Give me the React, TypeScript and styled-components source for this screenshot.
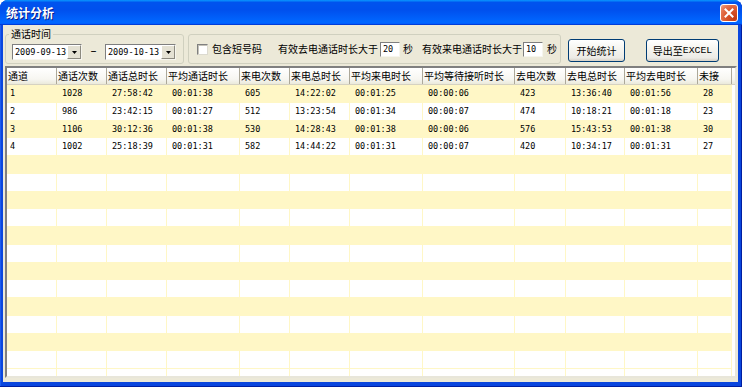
import React from 'react';
import styled, { createGlobalStyle } from 'styled-components';

const GlobalStyle = createGlobalStyle`
  html, body {
    margin: 0;
    padding: 0;
    background: #ffffff;
    overflow: hidden;
  }
  body {
    font-family: "Noto Sans CJK SC", "Noto Sans", sans-serif;
    font-size: 10px;
    color: #000;
  }
`;

const CJK = '"Noto Sans CJK SC", "Noto Sans", sans-serif';
const MONO = '"DejaVu Sans Mono", "Liberation Mono", monospace';
const STRIPE = '#fff7c6';

interface Column {
  title: string;
  width: number;
}

const columns: Column[] = [
  { title: '通道', width: 50 },
  { title: '通话次数', width: 50 },
  { title: '通话总时长', width: 60 },
  { title: '平均通话时长', width: 73 },
  { title: '来电次数', width: 50 },
  { title: '来电总时长', width: 60 },
  { title: '平均来电时长', width: 73 },
  { title: '平均等待接听时长', width: 92 },
  { title: '去电次数', width: 51 },
  { title: '去电总时长', width: 59 },
  { title: '平均去电时长', width: 73 },
  { title: '未接', width: 34 },
];

const data: string[][] = [
  ['1', '1028', '27:58:42', '00:01:38', '605', '14:22:02', '00:01:25', '00:00:06', '423', '13:36:40', '00:01:56', '28'],
  ['2', '986', '23:42:15', '00:01:27', '512', '13:23:54', '00:01:34', '00:00:07', '474', '10:18:21', '00:01:18', '23'],
  ['3', '1106', '30:12:36', '00:01:38', '530', '14:28:43', '00:01:38', '00:00:06', '576', '15:43:53', '00:01:38', '30'],
  ['4', '1002', '25:18:39', '00:01:31', '582', '14:44:22', '00:01:31', '00:00:07', '420', '10:34:17', '00:01:31', '27'],
];

const TOTAL_ROWS = 17;

const App: React.FC = () => {
  const rows: (string[] | null)[] = [];
  for (let i = 0; i < TOTAL_ROWS; i++) rows.push(data[i] ?? null);

  return (
    <>
      <GlobalStyle />
      <Window>
        <TitleBar>
          <Title>统计分析</Title>
          <CloseButton>
            <svg width="10" height="10" viewBox="0 0 10 10">
              <path d="M1.5 1.5 L8.5 8.5 M8.5 1.5 L1.5 8.5" stroke="#fff" strokeWidth="2" strokeLinecap="square" />
            </svg>
          </CloseButton>
        </TitleBar>

        <Client>
          <TopRow>
            <DateGroup>
              <Legend>通话时间</Legend>
              <Combo $w={70}>
                <ComboText>2009-09-13</ComboText>
                <ComboArrow>
                  <svg width="5" height="3" viewBox="0 0 5 3">
                    <path d="M0 0 H5 L2.5 3 Z" fill="#000" />
                  </svg>
                </ComboArrow>
              </Combo>
              <Dash>–</Dash>
              <Combo $w={71}>
                <ComboText>2009-10-13</ComboText>
                <ComboArrow>
                  <svg width="5" height="3" viewBox="0 0 5 3">
                    <path d="M0 0 H5 L2.5 3 Z" fill="#000" />
                  </svg>
                </ComboArrow>
              </Combo>
            </DateGroup>

            <OptionsGroup>
              <CheckBox />
              <Label $gap={4}>包含短号码</Label>
              <Label $gap={16}>有效去电通话时长大于</Label>
              <NumberField $gap={2}>20</NumberField>
              <Label $gap={3}>秒</Label>
              <Label $gap={9}>有效来电通话时长大于</Label>
              <NumberField $gap={1}>10</NumberField>
              <Label $gap={4}>秒</Label>
            </OptionsGroup>

            <XpButton $gap={7} $w={57}>开始统计</XpButton>
            <XpButton $gap={21} $w={73}>
              导出至<Latin>EXCEL</Latin>
            </XpButton>
          </TopRow>

          <ListView>
            <Header>
              {columns.map((c) => (
                <HeaderCell key={c.title} $w={c.width}>
                  {c.title}
                </HeaderCell>
              ))}
              <HeaderFiller />
            </Header>
            {rows.map((r, i) => (
              <Row key={i} $striped={i % 2 === 0 && i < 16}>
                {columns.map((c, j) => (
                  <Cell key={c.title} $w={c.width} $first={j === 0}>
                    {r ? r[j] : ''}
                  </Cell>
                ))}
              </Row>
            ))}
          </ListView>
        </Client>
      </Window>
    </>
  );
};

// Styled Components
const Window = styled.div`
  width: 742px;
  height: 387px;
  display: flex;
  flex-direction: column;
  background: #0a46de;
  border-radius: 8px 8px 0 0;
  overflow: hidden;
  box-shadow: inset -1px -1px 0 #001ea0, inset 1px 0 0 #1b5cf0;
`;

const TitleBar = styled.div`
  height: 25px;
  flex: 0 0 25px;
  display: flex;
  align-items: center;
  justify-content: space-between;
  padding: 0 4px 0 6px;
  box-sizing: border-box;
  background: linear-gradient(
    180deg,
    #0997ff 0%,
    #0053ee 10%,
    #0050ee 40%,
    #0066ff 86%,
    #0066ff 92%,
    #005bff 95%,
    #003dd7 97%,
    #003dd7 100%
  );
`;

const Title = styled.span`
  font-family: ${CJK};
  font-size: 12px;
  font-weight: bold;
  color: #ffffff;
  text-shadow: 1px 1px 0 #0a1a8a;
`;

const CloseButton = styled.div`
  width: 18px;
  height: 18px;
  box-sizing: border-box;
  border: 1px solid #ffffff;
  border-radius: 3px;
  display: flex;
  align-items: center;
  justify-content: center;
  background: radial-gradient(circle at 85% 85%, #c43b12 0%, #d9552c 45%, #e57450 75%, #f0a688 100%);
`;

const Client = styled.div`
  flex: 1;
  display: flex;
  flex-direction: column;
  margin: 0 4px 5px 3px;
  padding: 3px 1px 4px 2px;
  background: #ece9d8;
  min-height: 0;
`;

const TopRow = styled.div`
  display: flex;
  align-items: flex-start;
  height: 36px;
  flex: 0 0 36px;
`;

const DateGroup = styled.fieldset`
  margin: 0;
  width: 179px;
  box-sizing: border-box;
  padding: 4px 7px 3px 6px;
  border: 1px solid #d0d0bf;
  border-radius: 3px;
  display: flex;
  align-items: center;
  min-width: 0;
`;

const Legend = styled.legend`
  font-family: ${CJK};
  font-size: 10px;
  line-height: 12px;
  padding: 0 2px;
  margin-left: -3px;
  color: #000;
`;

const Combo = styled.div<{ $w: number }>`
  width: ${(p) => p.$w}px;
  height: 16px;
  box-sizing: border-box;
  display: flex;
  align-items: stretch;
  background: #ffffff;
  border: 1px solid;
  border-color: #7f7f7f #f6f5ee #f6f5ee #7f7f7f;
`;

const ComboText = styled.span`
  flex: 1;
  font-family: ${MONO};
  font-size: 8.5px;
  line-height: 14px;
  padding-left: 2px;
  white-space: nowrap;
`;

const ComboArrow = styled.span`
  width: 14px;
  box-sizing: border-box;
  display: flex;
  align-items: center;
  justify-content: center;
  background: #e4e1d3;
  border: 1px solid;
  border-color: #ffffff #8c8a80 #8c8a80 #ffffff;
`;

const Dash = styled.span`
  width: 23px;
  height: 16px;
  text-align: center;
  font-family: "DejaVu Sans", sans-serif;
  font-size: 12px;
  line-height: 15px;
`;

const OptionsGroup = styled.div`
  margin: 6px 0 0 4px;
  width: 373px;
  height: 30px;
  box-sizing: border-box;
  border: 1px solid #d0d0bf;
  border-radius: 3px;
  display: flex;
  align-items: center;
  padding-left: 8px;
`;

const CheckBox = styled.span`
  width: 11px;
  height: 11px;
  box-sizing: border-box;
  background: #ffffff;
  border: 1px solid;
  border-color: #808080 #dcdad0 #dcdad0 #808080;
  box-shadow: inset 1px 1px 0 #c4c2b8;
`;

const Label = styled.span<{ $gap: number }>`
  margin-left: ${(p) => p.$gap}px;
  font-family: ${CJK};
  font-size: 10px;
  line-height: 12px;
  white-space: nowrap;
`;

const NumberField = styled.span<{ $gap: number }>`
  margin-left: ${(p) => p.$gap}px;
  width: 20px;
  height: 15px;
  box-sizing: border-box;
  background: #ffffff;
  border: 1px solid;
  border-color: #7f7f7f #f6f5ee #f6f5ee #7f7f7f;
  font-family: ${MONO};
  font-size: 8.5px;
  line-height: 13px;
  padding-left: 2px;
`;

const XpButton = styled.div<{ $gap: number; $w: number }>`
  margin: 11px 0 0 ${(p) => p.$gap}px;
  width: ${(p) => p.$w}px;
  height: 23px;
  box-sizing: border-box;
  border: 1px solid #003c74;
  border-radius: 3px;
  display: flex;
  align-items: center;
  justify-content: center;
  background: linear-gradient(180deg, #ffffff 0%, #f6f5f0 40%, #ecebe6 85%, #d6d0c5 100%);
  font-family: ${CJK};
  font-size: 10px;
  white-space: nowrap;
`;

const Latin = styled.span`
  font-family: "Liberation Mono", monospace;
  font-size: 9.8px;
`;

const ListView = styled.div`
  flex: 1;
  margin-top: 2px;
  border: 2px solid;
  border-color: #7f7f7f #e8e6da #e8e6da #7f7f7f;
  background: #ffffff;
  overflow: hidden;
  min-height: 0;
`;

const Header = styled.div`
  display: flex;
  height: 17px;
  box-sizing: border-box;
  border-bottom: 1px solid #d6d2c2;
  background: linear-gradient(180deg, #ffffff 0%, #f7f6f1 70%, #ebeadb 100%);
`;

const HeaderCell = styled.div<{ $w: number }>`
  flex: 0 0 ${(p) => p.$w}px;
  box-sizing: border-box;
  padding-left: 1px;
  border-right: 1px solid #aca899;
  font-family: ${CJK};
  font-size: 10px;
  line-height: 16px;
  white-space: nowrap;
  overflow: hidden;
`;

const HeaderFiller = styled.div`
  flex: 1;
`;

const Row = styled.div<{ $striped: boolean }>`
  display: flex;
  width: 725px;
  height: 17.75px;
  background: ${(p) => (p.$striped ? STRIPE : '#ffffff')};
`;

const Cell = styled.div<{ $w: number; $first: boolean }>`
  flex: 0 0 ${(p) => p.$w}px;
  box-sizing: border-box;
  padding-left: ${(p) => (p.$first ? 3 : 5)}px;
  border-right: 1px solid ${STRIPE};
  border-bottom: 1px solid ${STRIPE};
  font-family: ${MONO};
  font-size: 8.5px;
  line-height: 17px;
  white-space: nowrap;
  overflow: hidden;
`;

export default App;
